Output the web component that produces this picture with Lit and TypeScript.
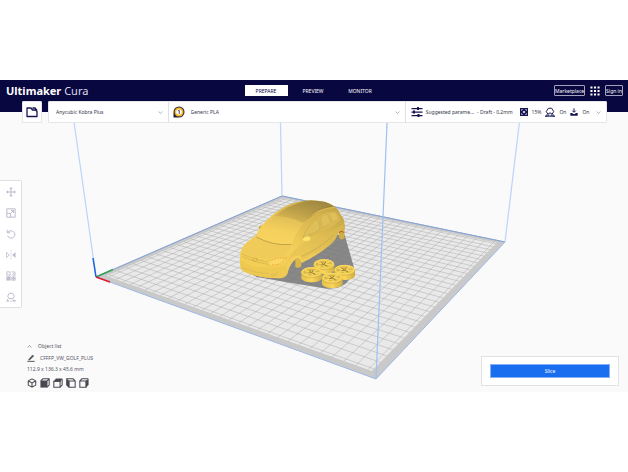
import { LitElement, html, svg, css } from "lit";
import { customElement, state } from "lit/decorators.js";

type Point = [number, number];

/* Build plate corners on screen, and the projection from plate units (0..1) to them. */
const LEFT: Point = [96, 277];
const FRONT: Point = [376, 379];
const RIGHT: Point = [505, 242];
const BACK: Point = [282, 196];

function projection(p0: Point, p1: Point, p2: Point, p3: Point) {
  const dx1 = p1[0] - p2[0], dx2 = p3[0] - p2[0], sx = p0[0] - p1[0] + p2[0] - p3[0];
  const dy1 = p1[1] - p2[1], dy2 = p3[1] - p2[1], sy = p0[1] - p1[1] + p2[1] - p3[1];
  const det = dx1 * dy2 - dx2 * dy1;
  const g = (sx * dy2 - dx2 * sy) / det;
  const h = (dx1 * sy - sx * dy1) / det;
  const a = p1[0] - p0[0] + g * p1[0], b = p3[0] - p0[0] + h * p3[0];
  const d = p1[1] - p0[1] + g * p1[1], e = p3[1] - p0[1] + h * p3[1];
  return (u: number, v: number) => {
    const w = g * u + h * v + 1;
    return `${((a * u + b * v + p0[0]) / w).toFixed(2)} ${((d * u + e * v + p0[1]) / w).toFixed(2)}`;
  };
}

const at = projection(LEFT, FRONT, RIGHT, BACK);
const CELLS = 30;
const INSET = 0.023;
const quad = (i: number) =>
  `M${at(i, i)}L${at(1 - i, i)}L${at(1 - i, 1 - i)}L${at(i, 1 - i)}Z`;
const gridPath = Array.from({ length: CELLS - 1 }, (_, i) => (i + 1) / CELLS)
  .map((t) => `M${at(t, INSET)}L${at(t, 1 - INSET)}M${at(INSET, t)}L${at(1 - INSET, t)}`)
  .join("");

const wheel = (x: number, y: number) => svg`
  <g transform="translate(${x} ${y})">
    <path d="M-31 0V18C-29 35 29 35 31 18V0Z" fill="url(#rim)"/>
    <ellipse rx="31" ry="14" fill="#f0cc52"/>
    <ellipse cy="1" rx="25" ry="10" fill="#d8b74b"/>
    <path d="M0 2L-20 -5M0 2L16 -8M0 2L25 3M0 2L3 12M0 2L-20 8" stroke="#f6d45a" stroke-width="5"/>
    <path d="M-8 -5L0 2L5 -6M-10 3L0 2L10 6" fill="none" stroke="#9c8136" stroke-width="3"/>
    <ellipse rx="29" ry="13" fill="none" stroke="#fbd95f" stroke-width="3"/>
    <path d="M-31 4Q-26 17 0 17Q26 17 31 4" fill="none" stroke="#cdac45" stroke-width="2"/>
  </g>`;

const car = svg`
  <g transform="translate(220 185) scale(.33333)">
    <path d="M66 252L110 276L210 293L320 311L352 309L376 297L404 266L401 244L374 150L300 150Z" fill="#777" fill-opacity=".85"/>
    <path d="M357 140L374 138L373 160Q365 168 357 158Z" fill="#cfae45"/>
    <path d="M226 222L244 216V244Q236 252 226 246Z" fill="#d9b748"/>
    <path d="M117 132Q115 121 124 121L130 128L122 137Z" fill="#cfae45"/>
    <path d="M62 250Q58 226 61 203Q64 186 82 171Q98 158 110 148Q117 128 142 104Q164 82 192 66Q226 48 270 46Q318 46 343 64Q354 72 361 88Q373 100 374 118Q376 136 371 145Q360 133 352 151Q346 168 330 180Q290 213 246 233Q243 216 228 221Q208 238 202 266Q196 279 178 280Q128 279 96 269Q66 262 62 250Z" fill="url(#body)"/>
    <path d="M61 222Q72 240 118 247Q170 252 204 238L208 246Q202 258 202 268Q196 279 178 280Q128 279 96 269Q66 262 62 250Z" fill="#e9c652" fill-opacity=".6"/>
    <path d="M163 94Q200 60 260 47Q320 44 344 66Q308 64 268 100Q258 110 246 113Q202 94 163 94Z" fill="url(#roof)"/>
    <path d="M163 94Q202 93 250 114Q232 138 214 178Q166 185 109 156Q121 130 163 94Z" fill="url(#glass)"/>
    <path d="M109 154Q158 182 214 178Q230 165 246 163Q206 187 190 216Q150 224 105 216Q84 212 65 205Q66 188 82 171Z" fill="#efcb5a"/>
    <path d="M109 156Q160 184 214 178" fill="none" stroke="#c2a349" stroke-width="3"/>
    <path d="M246 163Q262 118 292 98Q322 76 346 80Q360 94 361 105Q322 140 246 163Z" fill="#d8b953"/>
    <path d="M250 154Q264 120 294 101L300 133Q276 150 250 158ZM302 98Q314 89 322 87L332 114L306 130ZM327 85Q338 80 345 82L356 101L338 112Z" fill="#dfbf58" stroke="#cdad4e" stroke-width="2"/>
    <path d="M258 103Q288 72 343 67" fill="none" stroke="#dcbb55" stroke-width="3"/>
    <path d="M260 101Q290 67 339 63" fill="none" stroke="#9a833e" stroke-width="2"/>
    <path d="M240 178Q310 158 371 117L371 137Q358 133 351 151Q344 167 327 179L246 227Q238 208 221 220Q206 233 202 254Q199 232 213 207Z" fill="#dfbd55" fill-opacity=".5"/>
    <path d="M246 214Q303 188 340 151" fill="none" stroke="#c2a349" stroke-width="2"/>
    <path d="M202 252Q204 224 223 216Q242 209 246 232" fill="none" stroke="#f6d25d" stroke-width="4"/>
    <path d="M248 163Q252 154 265 154Q273 157 270 164Q260 170 248 166Z" fill="#ffe46c"/>
    <path d="M66 207Q98 222 148 232M68 215Q102 231 146 238" fill="none" stroke="#c2a24a" stroke-width="2" stroke-dasharray="7 2"/>
    <ellipse cx="105" cy="224" rx="7" ry="5" fill="none" stroke="#c9a94c" stroke-width="2"/>
    <path d="M145 232Q163 220 192 220Q184 237 151 243Z" fill="#fad766"/>
    <path d="M150 227Q170 218 200 219M148 241L176 238" fill="none" stroke="#e5773c" stroke-width="2" stroke-dasharray="3 5"/>
    <path d="M67 247Q110 267 145 265M152 269L174 264M154 273L171 270" fill="none" stroke="#d6b54e" stroke-width="2"/>
    <path d="M357 143Q363 135 371 142" fill="none" stroke="#b94e32" stroke-width="3"/>
    ${wheel(312, 237)}${wheel(275, 261)}${wheel(374, 254)}${wheel(337, 278)}
  </g>`;

const scene = html`
  <svg class="scene" viewBox="0 80 628 312" preserveAspectRatio="xMidYMid slice" role="img" aria-label="Build plate with a car model">
    <defs>
      <linearGradient id="body" x1="0" y1="1" x2="1" y2="0">
        <stop offset="0" stop-color="#f3ce52"/><stop offset=".45" stop-color="#f4cf59"/><stop offset="1" stop-color="#bd9d42"/>
      </linearGradient>
      <linearGradient id="roof" x1="0" y1="1" x2=".8" y2="0">
        <stop offset="0" stop-color="#e3c157"/><stop offset=".5" stop-color="#bd9f48"/><stop offset="1" stop-color="#9c853f"/>
      </linearGradient>
      <linearGradient id="glass" x1="0" y1="1" x2=".3" y2="0">
        <stop offset="0" stop-color="#fad660"/><stop offset=".6" stop-color="#f4cf5c"/><stop offset="1" stop-color="#e4c158"/>
      </linearGradient>
      <linearGradient id="rim">
        <stop offset="0" stop-color="#e6c24b"/><stop offset=".5" stop-color="#fbd559"/><stop offset="1" stop-color="#cfae45"/>
      </linearGradient>
    </defs>
    <path d=${quad(0)} fill="#c9c9c9"/>
    <path d=${quad(INSET)} fill="#e9e9e9"/>
    <path d=${gridPath} fill="none" stroke="#a8a8a8" stroke-opacity=".6" stroke-width=".8"/>
    <path d=${quad(0)} fill="none" stroke="#9db9e6" stroke-width="1"/>
    <path d="M96 277L282 196L505 242" fill="none" stroke="#8ba3cc" stroke-width="1"/>
    <path d="M71 101L96 277M280 101L282 196M522 101L505 242" fill="none" stroke="#bcd4fa" stroke-width="1.2"/>
    ${car}
    <path d="M388 101L376 379" fill="none" stroke="#9fc0f5" stroke-width="1.2"/>
    <path d="M96 277L113 269.500" stroke="#35a153" stroke-width="1.5"/>
    <path d="M96 277L110 282" stroke="#e01b2f" stroke-width="1.500"/>
    <path d="M96 277L93 258" stroke="#1a63e0" stroke-width="1.500"/>
  </svg>`;

const icon = (size: string, body: unknown) =>
  html`<svg class="icon ${size}" viewBox="0 0 24 24" aria-hidden="true">${body}</svg>`;

const chevron = svg`<path d="M3 7L12 17L21 7" fill="none" stroke="currentColor" stroke-width="2.500"/>`;
const chevronUp = svg`<path d="M3 17L12 7L21 17" fill="none" stroke="currentColor" stroke-width="2.500"/>`;
const folder = svg`<path d="M2 4H10L13 8H19L22 11V21H2ZM13 4H18L22 9" fill="none" stroke="currentColor" stroke-width="2.600" stroke-linejoin="round"/>`;
const apps = svg`<path d="M1 1H6V6H1ZM9.500 1H14.500V6H9.500ZM18 1H23V6H18ZM1 9.500H6V14.500H1ZM9.500 9.500H14.500V14.500H9.500ZM18 9.500H23V14.500H18ZM1 18H6V23H1ZM9.500 18H14.500V23H9.500ZM18 18H23V23H18Z" fill="currentColor"/>`;
const sliders = svg`<path d="M1 5H23M1 12H23M1 19H23" stroke="currentColor" stroke-width="2.500"/><path d="M14 2V8M6 9V15M15 16V22" stroke="currentColor" stroke-width="4"/>`;
const infill = svg`<path d="M0 0H24V24H0Z" fill="currentColor"/><path d="M12 8L16 12L12 16L8 12ZM4 4H9L4 9ZM20 4V9L15 4ZM4 20V15L9 20ZM20 20H15L20 15Z" fill="#fff"/>`;
const support = svg`<path d="M7 17L3 11L8 3H16L21 11L17 17Q12 11 7 17ZM1 22H5V17M9 22V18M15 22V18M23 22H19V17M0 22H24" fill="none" stroke="currentColor" stroke-width="2.300"/>`;
const adhesion = svg`<path d="M12 1V12M7 8L12 13L17 8" fill="none" stroke="currentColor" stroke-width="3"/><path d="M1 15H7L9 18H15L17 15H23V23H1Z" fill="currentColor"/>`;
const pencil = svg`<path d="M6 15L17 3L20 6L9 17L5 18Z" fill="currentColor" stroke="currentColor" stroke-width="2"/><path d="M1 22H23" stroke="currentColor" stroke-width="3"/>`;

const tools: [string, unknown][] = [
  ["Move", svg`<path d="M12 2V22M2 12H22" stroke="currentColor" stroke-width="2.500"/><path d="M12 0L16 5H8ZM12 24L8 19H16ZM0 12L5 8V16ZM24 12L19 16V8Z" fill="currentColor"/>`],
  ["Scale", svg`<path d="M2 2H22V22H2ZM2 13H11V22M12 12L18 6M12 6H18V12" fill="none" stroke="currentColor" stroke-width="2.400"/>`],
  ["Rotate", svg`<path d="M3 8Q9 2 16 5Q23 9 21 16Q18 23 10 22Q5 20 4 16M3 2V9H10" fill="none" stroke="currentColor" stroke-width="2.400"/>`],
  ["Mirror", svg`<path d="M12 1V4M12 7V10M12 13V16M12 19V22" stroke="currentColor" stroke-width="2"/><path d="M1 6L8 12L1 18Z" fill="none" stroke="currentColor" stroke-width="2"/><path d="M23 5V19L15 12Z" fill="currentColor"/>`],
  ["Per model settings", svg`<path d="M2 2H10V10H2ZM14 14H22V22H14ZM14 10L22 2M14 2H20M22 4V10H17M14 18H22M18 14V22" fill="none" stroke="currentColor" stroke-width="2.200"/><path d="M1 13H11V23H1Z" fill="currentColor"/>`],
  ["Support blocker", svg`<path d="M8 17L4 10L8 3H16L20 10L16 17Q12 14 8 17ZM1 22H8M4 22V17M11 22H14" fill="none" stroke="currentColor" stroke-width="2.400"/><path d="M16 19H23V23H16Z" fill="currentColor"/>`],
];

const views: [string, unknown][] = [
  ["3D view", svg`<path d="M12 2L21 7V17L12 22L3 17V7ZM3 7L12 12L21 7M12 12V22" fill="none" stroke="currentColor" stroke-width="2.500" stroke-linejoin="round"/>`],
  ["Front view", svg`<path d="M2 7L7 2H22V17L17 22M17 7L22 2" fill="none" stroke="currentColor" stroke-width="2.500"/><path d="M1 6H18V23H1Z" fill="currentColor"/>`],
  ["Top view", svg`<path d="M2 8H17V22H2ZM17 22L22 17V3" fill="none" stroke="currentColor" stroke-width="2.500"/><path d="M1 9L7 1H23L18 9Z" fill="currentColor"/>`],
  ["Left view", svg`<path d="M7 7H22V22H7ZM7 22L2 17V2H17L22 7" fill="none" stroke="currentColor" stroke-width="2.500"/><path d="M1 1L8 7V23L1 17Z" fill="currentColor"/>`],
  ["Right view", svg`<path d="M2 7H17V22H2ZM2 7L7 2H22" fill="none" stroke="currentColor" stroke-width="2.500"/><path d="M16 7L23 1V17L16 23Z" fill="currentColor"/>`],
];

@customElement("app-root")
export class AppRoot extends LitElement {
  @state() private stage = "PREPARE";

  static styles = css`
    :host {
      display: flex;
      box-sizing: border-box;
      min-height: 100vh;
      padding: 80px 0;
      background: #fff;
      color: #35354a;
      font: 5px/8px "Noto Sans", sans-serif;
    }
    * { box-sizing: border-box; }
    button, select, input {
      margin: 0;
      padding: 0;
      border: 0;
      border-radius: 0;
      background: none;
      color: inherit;
      font: inherit;
      appearance: none;
    }
    .app {
      position: relative;
      display: flex;
      flex: 1;
      flex-direction: column;
      min-width: 0;
      overflow: hidden;
      background: #fafafa;
    }
    .scene { position: absolute; inset: 0; width: 100%; height: 100%; }
    .icon { display: block; flex: none; width: 10px; height: 10px; }
    .icon.tiny { width: 5px; height: 5px; }
    .icon.small { width: 8px; height: 8px; }
    .icon.wide { width: 12px; height: 12px; }
    header {
      position: relative;
      display: grid;
      grid-template-columns: 1fr auto 1fr;
      align-items: start;
      height: 32px;
      padding: 5px 5px 0 6px;
      background: #08073f;
      color: #fff;
    }
    h1 { margin: 0; font-size: 12px; line-height: 11px; font-weight: 600; white-space: nowrap; }
    h1 { font-size: 11px; font-weight: 700; }
    h1 span { font-weight: 400; color: #dcdce8; }
    nav { display: flex; gap: 4px; margin-right: 3px; }
    .tab { width: 43px; height: 11px; text-align: center; }
    .tab.on { background: #fff; color: #08073f; }
    .account { display: flex; justify-content: flex-end; align-items: center; gap: 5px; }
    .outlined { height: 11px; border: 1px solid #a3a2be; border-radius: 1px; }
    .bar {
      position: relative;
      display: flex;
      gap: 6px;
      height: 22px;
      margin: -11px 21px 0 22px;
    }
    .open, .configs { border: 1px solid #e6e6ea; border-radius: 1px; background: #fff; }
    .open { display: grid; place-items: center; width: 20px; color: #17154f; }
    .configs { display: grid; grid-template-columns: 119fr 238fr 202fr; flex: 1; min-width: 0; }
    .field { display: flex; align-items: center; min-width: 0; padding: 0 5px 0 7px; }
    .field + .field, .settings { border-left: 1px solid #e0e0e4; }
    .field select { flex: 1; min-width: 0; height: 20px; }
    .material { gap: 6px; padding-left: 4px; }
    .chev { color: #777788; }
    .settings { display: flex; align-items: center; min-width: 0; padding: 0 5px; white-space: nowrap; }
    .settings .icon { color: #17154f; }
    .settings .chev { margin-left: auto; }
    .settings .chev .icon { color: #777788; }
    .profile { display: flex; gap: 3px; margin: 0 7px 0 3px; }
    .value { margin: 0 4px; }
    .tools {
      position: relative;
      display: flex;
      flex-direction: column;
      align-self: flex-start;
      width: 22px;
      margin-top: 57px;
      border: 1px solid #dedee4;
      border-left: 0;
      border-radius: 0 2px 2px 0;
      background: #fff;
      color: #bdbdce;
    }
    .tool { display: grid; place-items: center; height: 21px; }
    footer {
      position: relative;
      display: flex;
      justify-content: space-between;
      align-items: flex-end;
      margin-top: auto;
      padding: 0 9px 4px 27px;
      color: #55555e;
    }
    .object { display: flex; flex-direction: column; gap: 3px; }
    .toggle { display: flex; align-items: center; gap: 6px; }
    .name { display: flex; align-items: center; gap: 5px; height: 9px; }
    .name input { width: 60px; height: 8px; }
    .dims { margin: 0; }
    .views { display: flex; gap: 3px; margin-top: 2px; color: #484850; }
    .action { width: 22%; min-width: 138px; margin-bottom: 2px; padding: 7px 8px; border: 1px solid #e3e3e7; background: #fff; }
    .slice { display: block; width: 100%; height: 14px; border: 1px solid #82b1f7; background: #196ef0; color: #fff; }
  `;

  render() {
    return html`
      <div class="app">
        ${scene}
        <header>
          <h1>Ultimaker <span>Cura</span></h1>
          <nav>
            ${["PREPARE", "PREVIEW", "MONITOR"].map(
              (s) => html`<button class="tab ${s === this.stage ? "on" : ""}" @click=${() => (this.stage = s)}>${s}</button>`
            )}
          </nav>
          <div class="account">
            <button class="outlined">Marketplace</button>
            <button aria-label="Applications">${icon("", apps)}</button>
            <button class="outlined">Sign in</button>
          </div>
        </header>
        <div class="bar">
          <button class="open" aria-label="Open file">${icon("wide", folder)}</button>
          <div class="configs">
            <div class="field">
              <select aria-label="Printer"><option>Anycubic Kobra Plus</option></select>
              <span class="chev">${icon("tiny", chevron)}</span>
            </div>
            <div class="field material">
              <svg class="icon wide" viewBox="0 0 24 24" aria-hidden="true">
                <path d="M1 23V12A11 11 0 1 1 12 23Z" fill="#25243c"/>
                <circle cx="12" cy="12" r="9" fill="#f6b51e"/><circle cx="12" cy="12" r="5.500" fill="#fff"/>
                <path d="M10 10L12.500 8.500V16" fill="none" stroke="#25243c" stroke-width="1.600"/>
              </svg>
              <select aria-label="Material"><option>Generic PLA</option></select>
              <span class="chev">${icon("tiny", chevron)}</span>
            </div>
            <button class="settings">
              ${icon("wide", sliders)}
              <span class="profile"><span>Suggested parame...</span><span>- Draft - 0.2mm</span></span>
              ${icon("small", infill)}<span class="value">15%</span>
              ${icon("", support)}<span class="value">On</span>
              ${icon("small", adhesion)}<span class="value">On</span>
              <span class="chev">${icon("tiny", chevron)}</span>
            </button>
          </div>
        </div>
        <div class="tools" role="toolbar" aria-label="Tools">
          ${tools.map(([label, body]) => html`<button class="tool" aria-label=${label}>${icon("", body)}</button>`)}
        </div>
        <footer>
          <div class="object">
            <button class="toggle">${icon("tiny", chevronUp)}Object list</button>
            <div class="name">
              ${icon("small", pencil)}
              <input type="text" aria-label="Job name" value="CFFFP_VW_GOLF_PLUS" />
            </div>
            <p class="dims">112.9 x 136.3 x 45.6 mm</p>
            <div class="views">
              ${views.map(([label, body]) => html`<button aria-label=${label}>${icon("", body)}</button>`)}
            </div>
          </div>
          <div class="action"><button class="slice">Slice</button></div>
        </footer>
      </div>
    `;
  }
}
